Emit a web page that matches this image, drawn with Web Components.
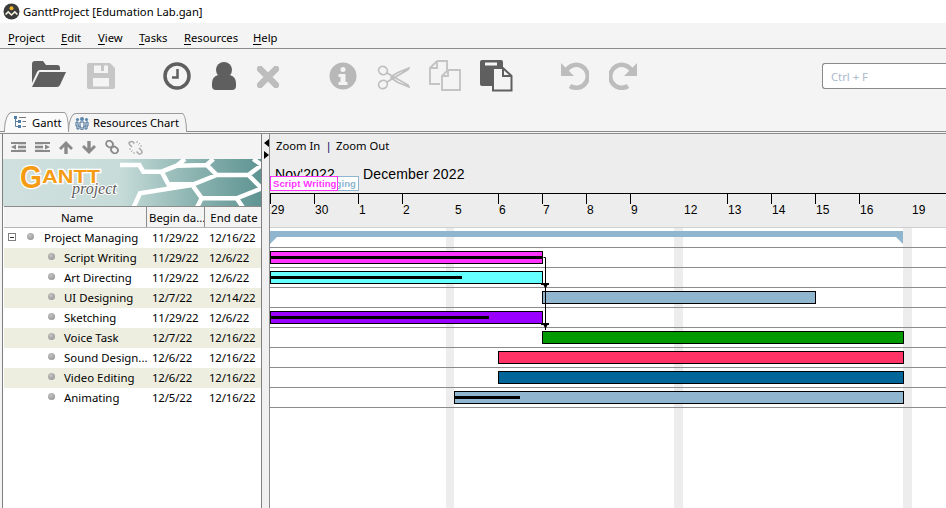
<!DOCTYPE html>
<html><head><meta charset="utf-8">
<style>
html,body{margin:0;padding:0;background:#f4f4f4}
body{font-family:"Noto Sans","Open Sans",sans-serif}
</style></head><body>
<app-window>
  <title-bar>GanttProject [Edumation Lab.gan]</title-bar>
  <menu-bar></menu-bar>
  <tool-bar></tool-bar>
  <tab-strip></tab-strip>
  <work-area>
    <task-panel>
      <task-row slot="rows" root name="Project Managing" begin="11/29/22" end="12/16/22"></task-row>
      <task-row slot="rows" alt name="Script Writing" begin="11/29/22" end="12/6/22"></task-row>
      <task-row slot="rows" name="Art Directing" begin="11/29/22" end="12/6/22"></task-row>
      <task-row slot="rows" alt name="UI Designing" begin="12/7/22" end="12/14/22"></task-row>
      <task-row slot="rows" name="Sketching" begin="11/29/22" end="12/6/22"></task-row>
      <task-row slot="rows" alt name="Voice Task" begin="12/7/22" end="12/16/22"></task-row>
      <task-row slot="rows" name="Sound Design..." begin="12/6/22" end="12/16/22"></task-row>
      <task-row slot="rows" alt name="Video Editing" begin="12/6/22" end="12/16/22"></task-row>
      <task-row slot="rows" name="Animating" begin="12/5/22" end="12/16/22"></task-row>
    </task-panel>
    <split-bar></split-bar>
    <gantt-chart>
      <gantt-row summary></gantt-row>
      <gantt-row from="0" to="273" color="#ff33ff" done="273"></gantt-row>
      <gantt-row from="0" to="273" color="#66ffff" done="192"></gantt-row>
      <gantt-row from="272" to="546" color="#8fb6ce"></gantt-row>
      <gantt-row from="0" to="273" color="#9900ff" done="219"></gantt-row>
      <gantt-row from="272" to="634" color="#009900"></gantt-row>
      <gantt-row from="228" to="634" color="#ff3366"></gantt-row>
      <gantt-row from="228" to="634" color="#006699"></gantt-row>
      <gantt-row from="184" to="634" color="#8fb6ce" done="66"></gantt-row>
    </gantt-chart>
  </work-area>
</app-window>
<script>
function def(name, css, html, init){
  customElements.define(name, class extends HTMLElement{
    connectedCallback(){
      if(this.shadowRoot) return;
      const r=this.attachShadow({mode:'open'});
      r.innerHTML='<style>'+css+'</style>'+(typeof html==='function'?html(this):html);
      if(init) init(this,r);
    }
  });
}
const UI='"Noto Sans","Open Sans",sans-serif';

def('app-window',`:host{display:flex;flex-direction:column;width:946px;height:508px;overflow:hidden;background:#f4f4f4;color:#000;font-family:${UI}}`,'<slot></slot>');

def('title-bar',`:host{display:flex;align-items:center;height:23px;background:#fff;font-size:11.25px;flex:none}
svg{margin:0 3px 0 3px;flex:none}`,
`<svg width="17" height="17" viewBox="0 0 17 17"><circle cx="8.5" cy="8.5" r="8" fill="#3b3b3b"/><circle cx="8.5" cy="5.2" r="2" fill="#f0b429"/><path d="M2 11l3.2-3.2L8.5 11l3.3-3.2L15 11l-1.2 1-2-2-3.3 3-3.3-3-2 2z" fill="#f5f0e0"/></svg><slot></slot>`);

def('menu-bar',`:host{display:flex;height:26px;box-sizing:border-box;border-bottom:1px solid #8c8c8c;padding:3px 0 0 8px;align-items:center;font-size:11.25px;flex:none;background:#f4f4f4}
u{text-decoration-thickness:1px;text-underline-offset:2px}
span{display:block;flex:none}`,
`<span style="width:53px"><u>P</u>roject</span><span style="width:37px"><u>E</u>dit</span><span style="width:41px"><u>V</u>iew</span><span style="width:45px"><u>T</u>asks</span><span style="width:69px"><u>R</u>esources</span><span><u>H</u>elp</span>`);

const D='#5f5f5f',L='#bdbdbd';
def('tool-bar',`:host{display:flex;height:63px;flex:none;align-items:flex-start;box-sizing:border-box;padding-top:10px;padding-left:32px}
svg{display:block;flex:none}
.s{margin-left:auto;width:124px;height:26px;box-sizing:border-box;margin-top:4px;border:1px solid #8a8a8a;border-right:0;border-radius:3px 0 0 3px;background:#fff;font-size:11.25px;color:#a9b9cb;padding:1px 0 0 8px;line-height:24px}`,
`<svg width="34" height="30" viewBox="0 0 34 30" style="margin-top:2px"><path fill="${D}" d="M0 3q0-3 3-3h8l3 4h11q3 0 3 3v2H8q-2 0-3 2L0 22z"/><path fill="${D}" d="M7.500 11H34l-6 13q-1 2-3 2H0z"/></svg>
<svg width="28" height="26" viewBox="0 0 28 26" style="margin:4px 0 0 21px"><path fill="#c6c6c6" fill-rule="evenodd" d="M2 0H23L28 5V24q0 2-2 2H2q-2 0-2-2V2q0-2 2-2zM7 2.500V10H21V2.500H17V8H14V2.500zM6 15V23.500H22V15z"/></svg>
<svg width="28" height="28" viewBox="0 0 28 28" style="margin:3px 0 0 48px"><circle cx="14" cy="14" r="12" fill="none" stroke="${D}" stroke-width="3.500"/><path d="M14.500 7V15.500H9" fill="none" stroke="${D}" stroke-width="2.500"/></svg>
<svg width="24" height="28" viewBox="0 0 24 28" style="margin:3px 0 0 21px"><circle cx="12" cy="8" r="8" fill="${D}"/><path fill="${D}" d="M0 21q0-6 6-8 6 4 12 0 6 2 6 8v3q0 4-4 4H4q-4 0-4-4z"/></svg>
<svg width="22" height="22" viewBox="0 0 22 22" style="margin:7px 0 0 21px"><path d="M3 3L19 19M19 3L3 19" stroke="${L}" stroke-width="6.500" stroke-linecap="round"/></svg>
<svg width="28" height="28" viewBox="0 0 28 28" style="margin:3px 0 0 50px"><circle cx="14" cy="14" r="13.500" fill="#b8b8b8"/><circle cx="14" cy="7.500" r="2.500" fill="#f4f4f4"/><path fill="#f4f4f4" d="M9.500 12h7v8h2v3h-9v-3h2v-5h-2z"/></svg>
<svg width="33" height="25" viewBox="0 0 33 25" style="margin:6px 0 0 20px"><g fill="none" stroke="#bfbfbf" stroke-width="1.700"><ellipse cx="6" cy="5.500" rx="4.500" ry="4" transform="rotate(25 6 5.500)"/><ellipse cx="6" cy="19.500" rx="4.500" ry="4" transform="rotate(-25 6 19.500)"/><path d="M10 8L31 20L32 22L21 17.500L15 13.500M10 17L31 4.500L32 3L21 7.500L15 11"/><circle cx="15" cy="12.500" r="1"/></g></svg>
<svg width="32" height="32" viewBox="0 0 32 32" style="margin:1px 0 0 19px"><g fill="none" stroke="#c4c4c4" stroke-width="1.900"><path d="M8 1H18V10M8 1L1 8V24H11M8 1V8H1"/><path d="M19 10H31V30H13V16zM19 10V16H13"/></g></svg>
<svg width="33" height="33" viewBox="0 0 33 33" style="margin:0 0 0 19px"><path fill="${D}" d="M2 1H21Q23 1 23 3V8H14V27H2Q0 27 0 25V3Q0 1 2 1z"/><rect x="5" y="3.500" width="12" height="3" fill="#f4f4f4"/><path fill="#f4f4f4" stroke="${D}" stroke-width="2" d="M13 9H23L31.500 17V31.500H13z"/><path fill="${D}" d="M22 9V18H31.500V16H24V9z"/></svg>
<svg width="28" height="28" viewBox="0 0 28 28" style="margin:3px 0 0 48px"><path d="M5 9A11.500 11.500 0 1 1 9 24" fill="none" stroke="${L}" stroke-width="4.500"/><path fill="${L}" d="M0 1V14H13z"/></svg>
<svg width="28" height="28" viewBox="0 0 28 28" style="margin:3px 0 0 20px"><path d="M23 9A11.500 11.500 0 1 0 19 24" fill="none" stroke="${L}" stroke-width="4.500"/><path fill="${L}" d="M28 1V14H15z"/></svg>
<div class="s">Ctrl + F</div>`);

def('tab-strip',`:host{display:flex;height:20px;flex:none;box-sizing:border-box;border-bottom:1px solid #8c8c8c;padding-left:4px;font-size:11.25px;align-items:flex-end;margin-bottom:1px}
.t{box-sizing:border-box;display:flex;align-items:center;border:1px solid #9a9a9a;border-bottom:0;border-top-left-radius:8px 18px;border-top-right-radius:5px 18px;margin-bottom:-1px;padding-bottom:1px}
.a{width:65px;background:#fbfbfb;padding-left:9px;gap:5px;position:relative;z-index:1;height:20px}
.b{width:119px;background:#f4f4f4;padding-left:6px;gap:4px;margin-left:-1px;height:19px}
svg{flex:none;display:block}`,
`<div class="t a"><svg width="13" height="13" viewBox="0 0 13 13"><path fill="none" stroke="#5f7f9c" d="M1.500 0V10.500H4M1.500 5.500H4"/><g fill="#4f7da6"><rect x="4" y="4" width="3" height="3"/><rect x="4" y="9" width="3" height="3"/><rect x="0" y="0" width="3" height="3"/></g><path stroke="#777" d="M5 1.500H12M8.500 5.500H12M8.500 10.500H12"/></svg>Gantt</div>
<div class="t b"><svg width="14" height="14" viewBox="0 0 14 14"><g fill="#5d86ad"><circle cx="7" cy="3" r="2"/><circle cx="2.500" cy="3.500" r="1.600"/><circle cx="11.500" cy="3.500" r="1.600"/></g><g fill="none" stroke="#3f6a95"><path d="M5 6h4v5H8v3H6v-3H5z"/><path d="M1 6h2v4h1v3H2v-3H1zM13 6h-2v4h-1v3h2v-3h1z"/></g></svg>Resources Chart</div>`);

def('work-area',`:host{display:flex;flex:1;min-height:0;border-top:1px solid #8c8c8c}`,'<slot></slot>');

const T='#8a8a8a';
def('task-panel',`:host{display:flex;flex-direction:column;width:260px;margin-left:2px;box-sizing:border-box;border-left:1px solid #7f7f7f;border-right:1px solid #7f7f7f;background:#fff;flex:none;font-size:11.4px}
.bar{display:flex;align-items:center;height:25px;box-sizing:border-box;background:#f4f4f4;padding:1px 0 0 8px;flex:none}
.bar svg{display:block;flex:none;margin-right:9px}
.logo{display:block;height:47px;flex:none}
.head{display:flex;height:22px;box-sizing:border-box;background:#f4f4f4;border-top:1px solid #8c8c8c;border-bottom:1px solid #b5b5b5;margin-left:1px;flex:none}
.head div{box-sizing:border-box;text-align:center;line-height:22px;border-right:1px solid #8c8c8c;white-space:nowrap;overflow:hidden}
.rows{display:block;margin-left:1px}`,
`<div class="bar">
<svg width="15" height="10" viewBox="0 0 15 10"><path fill="${T}" d="M0 0h15v2H0zM7 4h8v2H7zM0 8h15v2H0zM0 5L5 2.500V7.500z"/><path fill="${T}" d="M7 2.500h8v1H7zM7 6.500h8v1H7z" opacity=".5"/></svg>
<svg width="15" height="10" viewBox="0 0 15 10" style="margin-left:0"><path fill="${T}" d="M0 0h15v2H0zM0 4h8v2H0zM0 8h15v2H0zM15 5L10 2.500V7.500z"/><path fill="${T}" d="M0 2.500h8v1H0zM0 6.500h8v1H0z" opacity=".5"/></svg>
<svg width="14" height="13" viewBox="0 0 14 13"><path fill="${T}" d="M7 0L14 7L12 9L8.700 5.700V13H5.300V5.700L2 9L0 7z"/></svg>
<svg width="14" height="13" viewBox="0 0 14 13"><path fill="${T}" d="M7 13L14 6L12 4L8.700 7.300V0H5.300V7.300L2 4L0 6z"/></svg>
<svg width="14" height="14" viewBox="0 0 14 14"><g fill="none" stroke="${T}" stroke-width="1.800"><rect x="1" y="1" width="7" height="6" rx="3" transform="rotate(40 4.500 4)"/><rect x="6" y="7" width="7" height="6" rx="3" transform="rotate(40 9.500 10)"/></g></svg>
<svg width="15" height="15" viewBox="0 0 15 15"><g fill="none" stroke="#a8a8a8" stroke-width="1.500"><path d="M4 7L2 5Q0 3 2 2T5 2L6.500 3.500M11 8L13 10Q15 12 13 13.500T10 13L8.500 11.500"/><path d="M9 1V3M12 3L10.500 4.500M14 6H12M1 9H3M3 12L4.500 10.500M6 14V12" stroke-width="1"/></g></svg>
</div>
<svg class="logo" width="258" height="47" viewBox="0 0 258 47">
<defs><linearGradient id="g" x1="0" x2="1" y1="0" y2="0"><stop offset="0" stop-color="#d0e0df"/><stop offset=".45" stop-color="#c7dcd9"/><stop offset=".72" stop-color="#8fb6b3"/><stop offset="1" stop-color="#5e9492"/></linearGradient></defs>
<rect width="258" height="47" fill="url(#g)"/>
<path fill="none" stroke="#fff" stroke-width="4.500" stroke-linejoin="miter" d="M117 6H136.300L140.300 12.700H158.700L165.300 25.300H188.700L198.700 39.300L193.700 49M182 0L173.700 6.700L158.700 12.700M173.700 6.700L203.700 6L213.700 16L188.700 26M203.700 6L210.300 0M213.700 16H245.300L258.700 6L250.300 0M245.300 16L258.700 29.300L233.700 39.300H198.700M233.700 39.300L240.300 49M188.700 26L137 34.300L130.300 49"/>
<g style="font-family:'Liberation Sans',sans-serif;font-weight:700" fill="#f59b14" stroke="#fff" stroke-width="2.500" paint-order="stroke">
<text x="17" y="29" font-size="31" textLength="22" lengthAdjust="spacingAndGlyphs">G</text><text x="39" y="24" font-size="18" textLength="58" lengthAdjust="spacingAndGlyphs">ANTT</text></g>
<text x="69" y="35" font-size="16" font-style="italic" fill="#5c5c5c" stroke="#fff" stroke-width="2" paint-order="stroke" style="font-family:'Liberation Serif',serif">project</text>
</svg>
<div class="head"><div style="width:143px;padding-left:4px">Name</div><div style="width:58px;padding:0 0 0 2px;text-align:left">Begin da...</div><div style="flex:1;border-right:0;padding-left:2px">End date</div></div>
<slot class="rows" name="rows"></slot>`);

def('task-row',`:host{display:flex;height:20px;align-items:center;font-size:11.4px;background:#fff;white-space:nowrap}
:host([alt]){background:#eeeee0}
.k{width:8px;height:8px;box-sizing:border-box;border:1px solid #7f7f7f;margin-left:4px;display:flex;align-items:center;justify-content:center;flex:none;background:#fff}
.k i{display:block;width:4px;height:1px;background:#333}
.d{width:7px;height:7px;border-radius:50%;background:radial-gradient(circle at 40% 35%,#c4c4c4,#8c8c8c);flex:none;margin-top:-1px}
.n{flex:none}
.w{display:grid;grid-template-columns:148px 57px 1fr;width:100%;align-items:center;padding-bottom:2px;box-sizing:border-box}
.w>div+div{letter-spacing:-.15px}
.f{display:flex;align-items:center}`,
h=>{const root=h.hasAttribute('root');const a=h.getAttribute.bind(h);
return `<div class="w"><div class="f">${root?'<div class="k"><i></i></div><div class="d" style="margin-left:11px"></div><span class="n" style="margin-left:10px">':'<div class="d" style="margin-left:44px"></div><span class="n" style="margin-left:9px">'}${a('name')}</span></div><div>${a('begin')}</div><div>${a('end')}</div></div>`});

def('split-bar',`:host{display:block;width:7px;flex:none;position:relative;background:#f0f0f0}
svg{display:block;margin:5px 0 0 0}`,
`<svg width="7" height="20" viewBox="0 0 7 20"><path d="M7 0V8L2 4zM2 12V20L7 16z" fill="#000"/></svg>`);

def('gantt-chart',`:host{display:flex;flex-direction:column;flex:1;min-width:0;border-left:1px solid #8c8c8c;background:#fff;position:relative;--f:"Liberation Sans",Arial,sans-serif}
.head{height:93px;background:#ededed;border-bottom:1px solid #cfcfcf;display:flex;flex-direction:column;font-family:var(--f);flex:none}
.zoom{height:25px;box-sizing:border-box;padding:0 0 2px 6px;display:flex;align-items:center;font-size:11.25px;flex:none;font-family:"Noto Sans",sans-serif}
.zoom span{display:block;flex:none}
.months{height:34px;display:flex;flex:none;position:relative;font-size:14px;letter-spacing:.15px}
.months span{display:block;line-height:20px;margin-top:5px}
.label{position:absolute;top:17px;height:15px;box-sizing:border-box;background:#fff;font-size:9.5px;font-weight:700;line-height:13px;letter-spacing:.1px;white-space:nowrap;overflow:hidden}
.ticks{display:flex;border-top:1px solid #000;height:33px;flex:none;font-size:12px}
.ticks span{display:block;box-sizing:border-box;flex:none;height:10px;border-left:1px solid #000;position:relative}
.ticks span.n{border-left-color:transparent}
.ticks b{position:absolute;left:0;top:9px;font-weight:400;line-height:14px}
.body{position:relative;flex:1;display:flex;flex-direction:column}
.we{position:absolute;top:0;bottom:0;width:8px;background:#ededed}
.arrows{position:absolute;left:0;top:0;pointer-events:none}`,
()=>{
 const ticks=[[44,'29'],[44,'30'],[44,'1'],[52,'2'],[44,'5',1],[44,'6'],[44,'7'],[44,'8'],[53,'9'],[44,'12',1],[44,'13'],[44,'14'],[44,'15'],[52,'16'],[35,'19',1]];
 return `<div class="head">
 <div class="zoom"><span style="width:45px">Zoom In</span><span style="width:15px;text-align:center;color:#000060">|</span><span>Zoom Out</span></div>
 <div class="months"><span style="margin-left:5px;width:88px">Nov'2022</span><span>December 2022</span>
  <div class="label" style="left:20px;width:69px;border:1px solid #8fb6ce;color:#8fb6ce;text-align:right;padding-right:2px">ging</div>
  <div class="label" style="left:0;width:68px;border:1px solid #ff33ff;color:#ff33ff;padding-left:2px">Script Writing</div></div>
 <div class="ticks">${ticks.map(t=>`<span${t[2]?' class="n"':''} style="width:${t[0]}px"><b>${t[1]}</b></span>`).join('')}</div></div>
 <div class="body"><div class="we" style="left:176px"></div><div class="we" style="left:404px;width:9px"></div><div class="we" style="left:633px;width:9px"></div><slot></slot>
 <svg class="arrows" width="300" height="120" viewBox="270 228 300 120"><path d="M543.500 257.500H545.500V330" fill="none" stroke="#000"/><path d="M541 283H549V285H547.500L545.500 289L543.500 285H541zM541 323H549V325H547.500L545.500 329L543.500 325H541z" fill="#000"/></svg></div>`;
});

def('gantt-row',`:host{display:block;height:20px;box-sizing:border-box;border-bottom:1px solid #8c8c8c;position:relative;padding-top:3px}
.bar{height:13px;box-sizing:border-box;border:1px solid #000;position:relative;display:block}
.p{display:block;height:3px;background:#000;margin-top:4px}
.sum{display:block;height:6px;background:#8fb6ce;width:633px;margin-top:0}
.ends{display:flex;justify-content:space-between;width:633px}`,
h=>{
 if(h.hasAttribute('summary')) return `<div class="sum"></div><div class="ends"><svg width="7" height="7" style="display:block"><path d="M0 0H7L0 7z" fill="#8fb6ce"/></svg><svg width="7" height="7" style="display:block"><path d="M0 0H7V7z" fill="#8fb6ce"/></svg></div>`;
 const f=+h.getAttribute('from'),t=+h.getAttribute('to'),d=h.getAttribute('done');
 return `<div class="bar" style="margin-left:${f}px;width:${t-f}px;background:${h.getAttribute('color')}">${d?`<div class="p" style="width:${Math.min(d-1,t-f-2)}px"></div>`:''}</div>`;
});
</script>
</body></html>
